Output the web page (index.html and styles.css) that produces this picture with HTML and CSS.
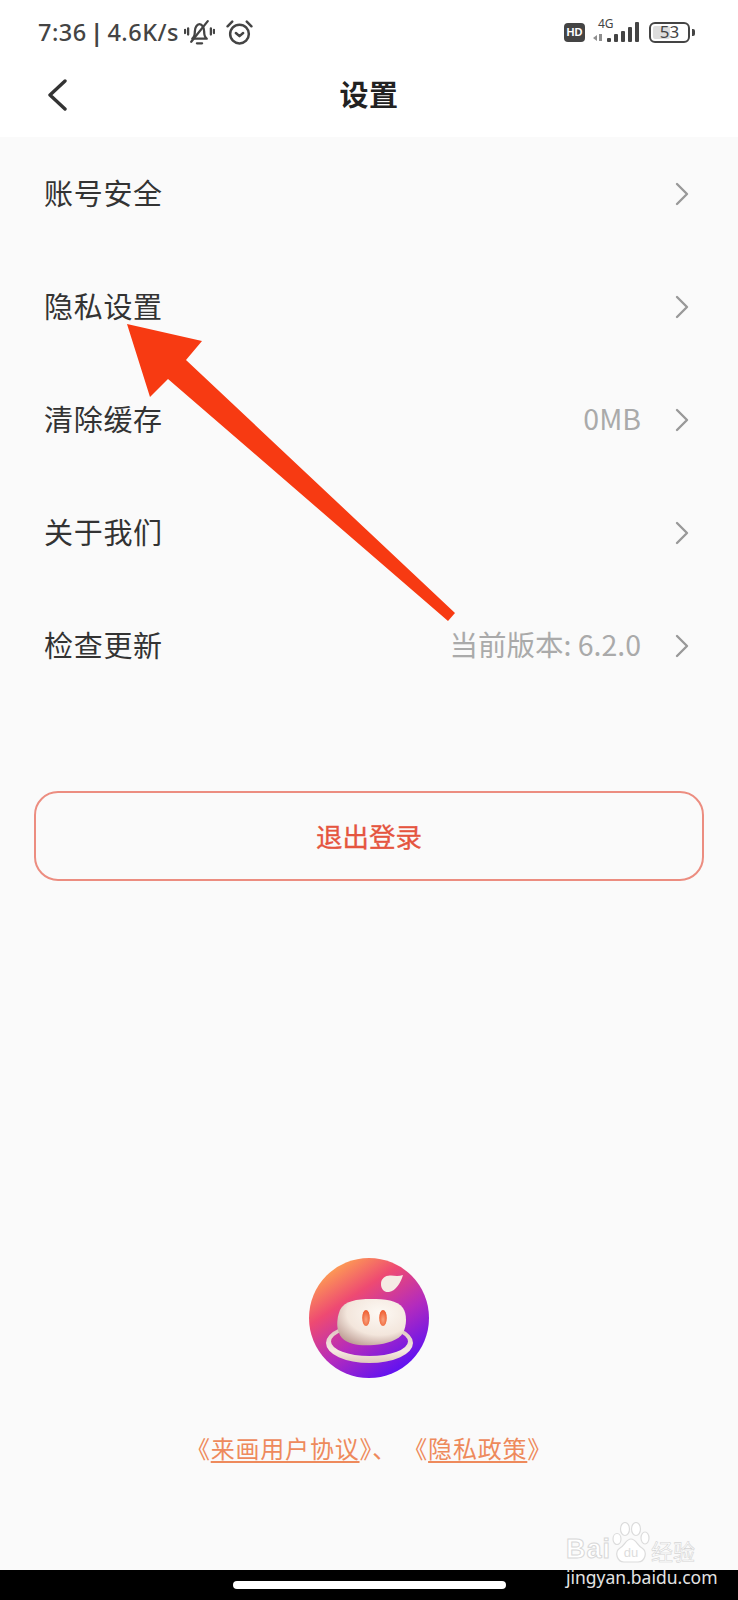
FILE: index.html
```html
<!DOCTYPE html>
<html lang="zh-CN">
<head>
<meta charset="utf-8">
<title>设置</title>
<link rel="stylesheet" href="styles.css">
</head>
<body>
<div class="app">
  <header class="top">
    <div class="status">
      <div class="status-left">
        <span class="clock">7:36 <b class="sep">|</b> 4.6K/s</span>
        <svg class="ic-bell" viewBox="0 0 30 26" fill="none" stroke="#444" stroke-width="2.200" stroke-linecap="round" stroke-linejoin="round">
          <path d="M8 19c2-1.500 2.500-3.500 2.500-7 0-4 2-7 4.500-7s4.500 3 4.500 7c0 3.500.5 5.500 2.500 7z"/>
          <path d="M12.500 23.500h5"/>
          <path d="M7 22L23 2"/>
          <path d="M4 9v6M1 10.500v3M26 9v6M29 10.500v3"/>
        </svg>
        <svg class="ic-alarm" viewBox="0 0 26 24" fill="none" stroke="#444" stroke-width="2.400" stroke-linecap="round" stroke-linejoin="round">
          <circle cx="13" cy="13.500" r="9"/>
          <path d="M1.500 6L6 1.500M24.500 6L20 1.500"/>
          <path d="M9.500 12.500l3.500 3 3.500-3"/>
        </svg>
      </div>
      <div class="status-right">
        <span class="hd">HD</span>
        <div class="signal">
          <span class="net">4G</span>
          <svg class="bars" viewBox="0 0 46 22" fill="#444">
            <path d="M0 17l4-3v6zM6 13h3v7H6z" opacity=".6"/>
            <rect x="14" y="17" width="4" height="4" rx="1"/>
            <rect x="21" y="13" width="4" height="8" rx="1"/>
            <rect x="28" y="10" width="4" height="11" rx="1"/>
            <rect x="35" y="6" width="4" height="15" rx="1"/>
            <rect x="42" y="1" width="4" height="20" rx="1"/>
          </svg>
        </div>
        <div class="battery">
          <div class="battery-body"><span class="battery-fill"></span><span class="battery-num">53</span></div>
          <span class="battery-cap"></span>
        </div>
      </div>
    </div>
    <nav class="nav">
      <svg class="back" viewBox="0 0 20 32" fill="none" stroke="#333" stroke-width="3.400" stroke-linecap="round" stroke-linejoin="round"><path d="M18 2 L3 16 L18 30"/></svg>
      <h1 class="title">设置</h1>
    </nav>
  </header>

  <main class="content">
    <ul class="menu">
      <li class="row"><span class="row-label">账号安全</span><svg class="chev" viewBox="0 0 14 24" fill="none" stroke="#999" stroke-width="2.400" stroke-linecap="round" stroke-linejoin="round"><path d="M2 2l10 10L2 22"/></svg></li>
      <li class="row"><span class="row-label">隐私设置</span><svg class="chev" viewBox="0 0 14 24" fill="none" stroke="#999" stroke-width="2.400" stroke-linecap="round" stroke-linejoin="round"><path d="M2 2l10 10L2 22"/></svg></li>
      <li class="row"><span class="row-label">清除缓存</span><span class="row-value">0MB</span><svg class="chev" viewBox="0 0 14 24" fill="none" stroke="#999" stroke-width="2.400" stroke-linecap="round" stroke-linejoin="round"><path d="M2 2l10 10L2 22"/></svg></li>
      <li class="row"><span class="row-label">关于我们</span><svg class="chev" viewBox="0 0 14 24" fill="none" stroke="#999" stroke-width="2.400" stroke-linecap="round" stroke-linejoin="round"><path d="M2 2l10 10L2 22"/></svg></li>
      <li class="row"><span class="row-label">检查更新</span><span class="row-value">当前版本: 6.2.0</span><svg class="chev" viewBox="0 0 14 24" fill="none" stroke="#999" stroke-width="2.400" stroke-linecap="round" stroke-linejoin="round"><path d="M2 2l10 10L2 22"/></svg></li>
    </ul>

    <button class="logout" type="button">退出登录</button>

    <div class="about">
      <svg class="mascot" viewBox="0 0 120 120">
        <defs>
          <linearGradient id="disc" x1="0.180" y1="0.050" x2="0.780" y2="0.950">
            <stop offset="0" stop-color="#ffa650"/>
            <stop offset="0.300" stop-color="#ee4a72"/>
            <stop offset="0.620" stop-color="#b42bbd"/>
            <stop offset="1" stop-color="#5a10f5"/>
          </linearGradient>
          <radialGradient id="head" cx="0.620" cy="0.300" r="0.800">
            <stop offset="0" stop-color="#fdf9f4"/>
            <stop offset="0.600" stop-color="#f3e6dc"/>
            <stop offset="1" stop-color="#b9978f"/>
          </radialGradient>
          <linearGradient id="ring" x1="0" y1="0" x2="0" y2="1">
            <stop offset="0" stop-color="#d8bcb8"/>
            <stop offset="0.700" stop-color="#f6eae2"/>
            <stop offset="1" stop-color="#e0c8bd"/>
          </linearGradient>
          <radialGradient id="eye" cx="0.500" cy="0.600" r="0.600">
            <stop offset="0" stop-color="#f9a27e"/>
            <stop offset="1" stop-color="#ee5a2c"/>
          </radialGradient>
        </defs>
        <circle cx="60" cy="60" r="60" fill="url(#disc)"/>
        <path fill-rule="evenodd" fill="url(#ring)" d="M17 85a43.500 20 0 1 0 87 0a43.500 20 0 1 0-87 0zM22 83.500a38.500 14.500 0 1 1 77 0a38.500 14.500 0 1 1-77 0z"/>
        <path d="M62 41c-14 0-27 2-31 11-4 10-4 21 2 28 7 7 19 8 32 7 13-1 25-5 29-12 4-8 4-19 0-25-6-8-18-9-32-9z" fill="url(#head)"/>
        <ellipse cx="57" cy="60" rx="3.800" ry="8" fill="url(#eye)"/>
        <ellipse cx="74" cy="60" rx="3.800" ry="8" fill="url(#eye)"/>
        <path d="M72 26c0-6 5-9 10-8.500 4 .5 8 1 12-.5-2 7-7 16-14 17-5 .5-8-3-8-8z" fill="#f5ebe4"/>
      </svg>
      <p class="legal">《<a class="legal-link">来画用户协议</a>》、 《<a class="legal-link">隐私政策</a>》</p>
    </div>
  </main>

  <footer class="gesture"><span class="pill"></span></footer>

  <svg class="arrow" viewBox="0 0 738 1600">
    <polygon points="127,324 202,341 186,360 455,613 448,621 168,379 150,397"/>
  </svg>

  <div class="mark">
    <div class="mark-logo">
      <span class="mark-word">Bai</span>
      <svg class="mark-paw" viewBox="0 0 40 42" fill="#fff" stroke="#dcdcdc" stroke-width="1.200">
        <ellipse cx="6" cy="17" rx="4" ry="5.500"/>
        <ellipse cx="14" cy="7" rx="4.500" ry="6.500"/>
        <ellipse cx="25" cy="7" rx="4.500" ry="6.500"/>
        <ellipse cx="34" cy="16" rx="4" ry="6"/>
        <path d="M20 17c-5 0-6 6-11 9-6 4-3 14 4 14h14c7 0 10-10 4-14-5-3-6-9-11-9z"/>
        <text class="mark-du" x="20" y="35">du</text>
      </svg>
      <span class="mark-cn">经验</span>
    </div>
    <span class="mark-url">jingyan.baidu.com</span>
  </div>
</div>
</body>
</html>
```

FILE: styles.css
```css
* { box-sizing: border-box; }

html, body {
  margin: 0;
  padding: 0;
}

body {
  font-family: "Noto Sans CJK SC", "Noto Sans", sans-serif;
  background: #fafafa;
}

.app {
  position: relative;
  width: 738px;
  height: 1600px;
  display: flex;
  flex-direction: column;
  overflow: hidden;
  background: #fafafa;
}

/* Status bar and title bar */
.top {
  height: 137px;
  flex: none;
  background: #fff;
}

.status {
  height: 64px;
  display: flex;
  justify-content: space-between;
  align-items: center;
  padding: 0 43px 0 38px;
}

.status-left,
.status-right {
  display: flex;
  align-items: center;
}

.clock {
  font-family: "Noto Sans", sans-serif;
  font-size: 23.500px;
  font-weight: 500;
  line-height: 30px;
  letter-spacing: 0.500px;
  word-spacing: -3px;
  color: #444;
}

.sep {
  font-weight: 700;
}

.ic-bell {
  width: 31px;
  height: 27px;
  margin-left: 5px;
}

.ic-alarm {
  width: 27px;
  height: 25px;
  margin-left: 11px;
}

.hd {
  width: 21px;
  height: 19px;
  border-radius: 4px;
  background: #444;
  color: #fff;
  font: 700 11px/19px "Liberation Sans", sans-serif;
  text-align: center;
}

.signal {
  position: relative;
  width: 46px;
  height: 22px;
  margin-left: 8px;
}

.net {
  position: absolute;
  left: 5px;
  top: -4px;
  font: 400 12px/13px "Noto Sans", sans-serif;
  color: #444;
}

.bars {
  position: absolute;
  left: 0;
  bottom: 0;
  width: 46px;
  height: 22px;
}

.battery {
  display: flex;
  align-items: center;
  margin-left: 10px;
}

.battery-body {
  position: relative;
  width: 41px;
  height: 21px;
  border: 2.500px solid #444;
  border-radius: 6px;
  padding: 2px;
}

.battery-fill {
  display: block;
  width: 53%;
  height: 100%;
  background: #ddd;
  border-radius: 2px;
}

.battery-num {
  position: absolute;
  inset: 0;
  text-align: center;
  font: 400 17px/16px "Noto Sans", sans-serif;
  color: #444;
}

.battery-cap {
  width: 3px;
  height: 7px;
  margin-left: 2px;
  border-radius: 0 2px 2px 0;
  background: #444;
}

.nav {
  position: relative;
  height: 73px;
  display: flex;
  align-items: center;
  justify-content: center;
}

.back {
  position: absolute;
  left: 47px;
  top: 15px;
  width: 20px;
  height: 32px;
}

.title {
  margin: 0 0 16px;
  font-size: 29px;
  letter-spacing: 0.500px;
  font-weight: 700;
  line-height: 40px;
  color: #222;
}

/* Settings list */
.content {
  flex: 1;
  display: flex;
  flex-direction: column;
}

.menu {
  list-style: none;
  margin: 0;
  padding: 0;
}

.row {
  height: 113px;
  display: flex;
  align-items: center;
  padding: 0 49px 0 44px;
}

.row-label {
  flex: 1;
  padding-bottom: 4px;
  font-size: 29px;
  letter-spacing: 0.700px;
  line-height: 40px;
  color: #333;
}

.row-value {
  padding-bottom: 4px;
  font-size: 28.500px;
  line-height: 36px;
  color: #aaa;
}

.chev {
  width: 14px;
  height: 24px;
  margin-left: 34px;
}

.logout {
  display: block;
  width: 670px;
  height: 90px;
  margin: 89px 0 0 34px;
  border: 2px solid #ec8d80;
  border-radius: 24px;
  background: transparent;
  font-family: inherit;
  font-size: 26.500px;
  line-height: 36px;
  color: #e5553f;
  -webkit-text-stroke: 0.300px #e5553f;
}

.about {
  margin-top: 377px;
  display: flex;
  flex-direction: column;
  align-items: center;
}

.mascot {
  width: 120px;
  height: 120px;
  display: block;
}

.legal {
  margin: 53px 0 0;
  font-size: 24px;
  line-height: 34px;
  letter-spacing: 0.800px;
  color: #ee8a5c;
  white-space: nowrap;
}

.legal-link {
  text-decoration: underline;
  text-underline-offset: 3px;
}

.gesture {
  height: 30px;
  flex: none;
  background: #000;
  display: flex;
  justify-content: center;
  padding-top: 11px;
}

.pill {
  width: 273px;
  height: 8px;
  border-radius: 4px;
  background: #fff;
}

/* Annotation arrow over the list */
.arrow {
  position: absolute;
  left: 0;
  top: 0;
  width: 738px;
  height: 1600px;
  pointer-events: none;
}

.arrow polygon { fill: #f73a12; }

/* Corner watermark */
.mark {
  position: absolute;
  left: 566px;
  top: 1520px;
  width: 170px;
  height: 66px;
}

.mark-logo {
  display: flex;
  align-items: flex-end;
  height: 44px;
}

.mark-word {
  font: 700 27px/30px "Liberation Sans", sans-serif;
  letter-spacing: 1px;
  color: #fff;
  -webkit-text-stroke: 1px #d8d8d8;
}

.mark-paw {
  width: 40px;
  height: 42px;
}

.mark-du {
  font: 400 13px "Liberation Sans", sans-serif;
  text-anchor: middle;
  fill: #ddd;
  stroke: none;
}

.mark-cn {
  font-size: 22px;
  line-height: 28px;
  color: #fff;
  -webkit-text-stroke: 0.600px #d4d4d4;
}

.mark-url {
  display: block;
  margin-top: 3px;
  font: 400 17.500px/20px "Noto Sans", sans-serif;
  color: #e4e4e4;
}
```
